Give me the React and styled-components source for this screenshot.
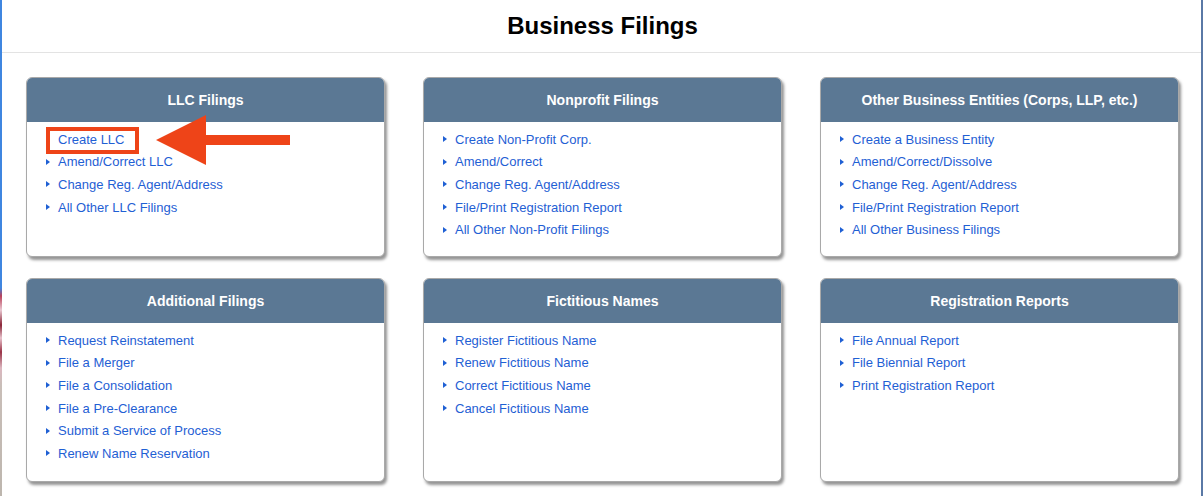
import React from "react";
import styled, { createGlobalStyle } from "styled-components";

const Global = createGlobalStyle`
  html, body { margin: 0; padding: 0; background: #fff; }
  body { font-family: "Liberation Sans", Arial, Helvetica, sans-serif; }
`;

const Frame = styled.div`
  display: flex;
  width: 1203px;
  height: 496px;
  overflow: hidden;
`;

const EdgeLeft = styled.div`
  flex: 0 0 2px;
  background: linear-gradient(
    to bottom,
    #3f86e0 0px,
    #3f86e0 288px,
    #b9405a 296px,
    #e9c9d2 310px,
    #8a2538 325px,
    #e7c3cc 338px,
    #9a3448 352px,
    #dcb7c0 368px,
    #c9beb8 385px,
    #bdb6ae 496px
  );
`;

const EdgeRight = styled.div`
  flex: 0 0 2px;
  background: #5a79a6;
`;

const Main = styled.main`
  flex: 1;
  display: flex;
  flex-direction: column;
`;

const TitleBar = styled.header`
  height: 52px;
  border-bottom: 1px solid #e3e3e3;
  display: flex;
  align-items: center;
  justify-content: center;
`;

const Title = styled.h1`
  margin: 0;
  font-size: 24px;
  font-weight: 700;
  color: #000;
  transform: translateX(1px);
`;

const Grid = styled.div`
  display: grid;
  grid-template-columns: repeat(3, 359px);
  grid-template-rows: 180px 204px;
  column-gap: 38px;
  row-gap: 21px;
  padding: 24px 0 0 24px;
`;

const Card = styled.section`
  position: relative;
  background: #fff;
  border: 1px solid #a9a9a9;
  border-radius: 6px;
  box-shadow: 2px 3px 3px rgba(0, 0, 0, 0.42);
  display: flex;
  flex-direction: column;
`;

const CardHead = styled.div`
  flex: 0 0 44px;
  background: #5b7894;
  border-radius: 5px 5px 0 0;
  display: flex;
  align-items: center;
  justify-content: center;
  color: #fff;
  font-size: 14px;
  font-weight: 700;
`;

const LinkList = styled.ul`
  list-style: none;
  margin: 0;
  padding: 6px 0 0 19px;
`;

const Item = styled.li`
  position: relative;
  display: flex;
  align-items: center;
  height: 22.6px;
  font-size: 13px;
  color: #1f60d4;

  &::before {
    content: "";
    width: 0;
    height: 0;
    border-top: 3.5px solid transparent;
    border-bottom: 3.5px solid transparent;
    border-left: 4px solid #1f60d4;
    margin-right: 8px;
  }
`;

const Mark = styled.span`
  position: absolute;
  left: 0;
  top: -1px;
  width: 93px;
  height: 27px;
  box-sizing: border-box;
  border: 4px solid #ee4418;
`;

const Arrow = styled.svg`
  position: absolute;
  left: 129px;
  top: 37px;
  width: 134px;
  height: 50px;
`;

const cards = [
  {
    title: "LLC Filings",
    links: ["Create LLC", "Amend/Correct LLC", "Change Reg. Agent/Address", "All Other LLC Filings"],
    marked: true,
  },
  {
    title: "Nonprofit Filings",
    links: [
      "Create Non-Profit Corp.",
      "Amend/Correct",
      "Change Reg. Agent/Address",
      "File/Print Registration Report",
      "All Other Non-Profit Filings",
    ],
  },
  {
    title: "Other Business Entities (Corps, LLP, etc.)",
    links: [
      "Create a Business Entity",
      "Amend/Correct/Dissolve",
      "Change Reg. Agent/Address",
      "File/Print Registration Report",
      "All Other Business Filings",
    ],
  },
  {
    title: "Additional Filings",
    links: [
      "Request Reinstatement",
      "File a Merger",
      "File a Consolidation",
      "File a Pre-Clearance",
      "Submit a Service of Process",
      "Renew Name Reservation",
    ],
  },
  {
    title: "Fictitious Names",
    links: [
      "Register Fictitious Name",
      "Renew Fictitious Name",
      "Correct Fictitious Name",
      "Cancel Fictitious Name",
    ],
  },
  {
    title: "Registration Reports",
    links: ["File Annual Report", "File Biennial Report", "Print Registration Report"],
  },
];

function FilingCard({ title, links, marked }) {
  return (
    <Card>
      <CardHead>{title}</CardHead>
      <LinkList>
        {links.map((l, i) => (
          <Item key={l}>
            {l}
            {marked && i === 0 && <Mark />}
          </Item>
        ))}
      </LinkList>
      {marked && (
        <Arrow viewBox="0 0 134 50">
          <path d="M0 25 L50 0 L50 20 L134 20 L134 30 L50 30 L50 50 Z" fill="#ee4418" />
        </Arrow>
      )}
    </Card>
  );
}

export default function App() {
  return (
    <Frame>
      <Global />
      <EdgeLeft />
      <Main>
        <TitleBar>
          <Title>Business Filings</Title>
        </TitleBar>
        <Grid>
          {cards.map((c) => (
            <FilingCard key={c.title} {...c} />
          ))}
        </Grid>
      </Main>
      <EdgeRight />
    </Frame>
  );
}
